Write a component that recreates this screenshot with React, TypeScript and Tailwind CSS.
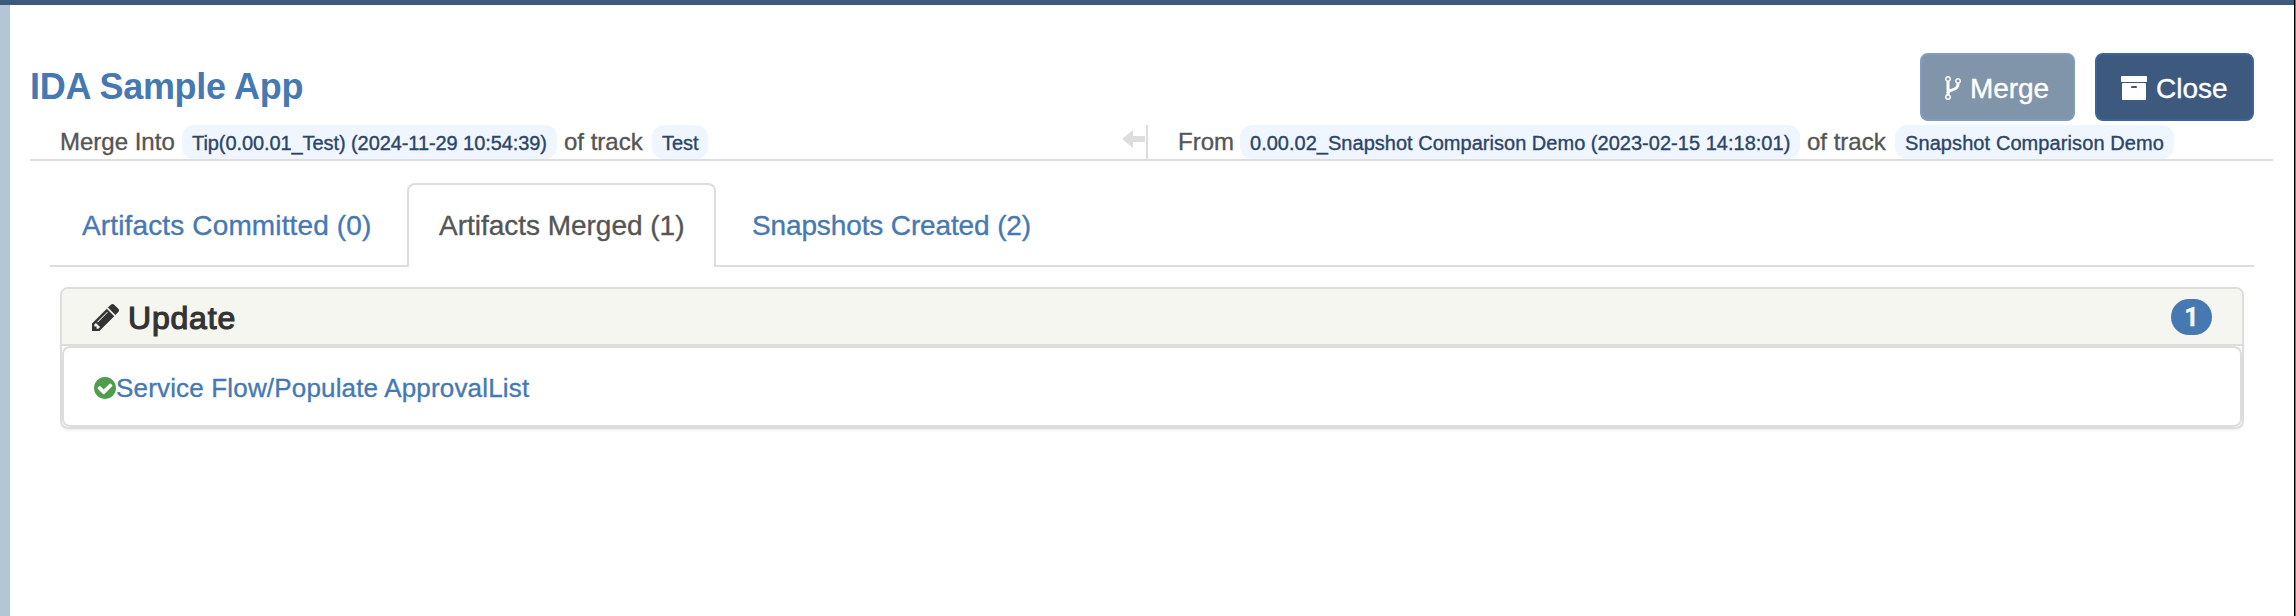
import type { ReactNode } from "react";

function Icon({ path, viewBox, className }: { path: string; viewBox: string; className: string }) {
  return (
    <svg viewBox={viewBox} className={`block shrink-0 fill-current stroke-none ${className}`} aria-hidden="true">
      <path d={path} />
    </svg>
  );
}

const FORK =
  "M288 1472q0-40-28-68t-68-28-68 28-28 68 28 68 68 28 68-28 28-68zM288 320q0-40-28-68t-68-28-68 28-28 68 28 68 68 28 68-28 28-68zM928 448q0-40-28-68t-68-28-68 28-28 68 28 68 68 28 68-28 28-68zM1024 448q0 52-26 96.5t-70 69.5q-2 287-226 414-68 38-203 81-128 40-169.5 71t-41.5 100v26q44 25 70 69.5t26 96.5q0 80-56 136t-136 56-136-56-56-136q0-52 26-96.5t70-69.5v-820q-44-25-70-69.5t-26-96.5q0-80 56-136t136-56 136 56 56 136q0 52-26 96.5t-70 69.5v497q54-26 154-57 55-17 87.5-29.5t70.5-31 59-39.5 40.5-51 28-69.5 8.5-91.5q-44-25-70-69.5t-26-96.5q0-80 56-136t136-56 136 56 56 136z";
const ARCHIVE =
  "M1088 832q0-26-19-45t-45-19h-256q-26 0-45 19t-19 45 19 45 45 19h256q26 0 45-19t19-45zM1664 640v960q0 26-19 45t-45 19h-1408q-26 0-45-19t-19-45v-960q0-26 19-45t45-19h1408q26 0 45 19t19 45zM1728 192v256q0 26-19 45t-45 19h-1536q-26 0-45-19t-19-45v-256q0-26 19-45t45-19h1536q26 0 45 19t19 45z";
const PENCIL =
  "M363 1536l91-91-235-235-91 91v107h128v128h107zM886 608q0-22-22-22-10 0-17 7l-542 542q-7 7-7 17 0 22 22 22 10 0 17-7l542-542q7-7 7-17zM832 416l416 416-832 832h-416v-416zM1515 512q0 53-37 90l-166 166-416-416 166-165q36-38 90-38 53 0 91 38l235 234q37 39 37 91z";
const CHECK =
  "M1284 734q0-28-18-46l-91-90q-19-19-45-19t-45 19l-408 407-226-226q-19-19-45-19t-45 19l-91 90q-18 18-18 46 0 27 18 45l362 362q19 19 45 19 27 0 46-19l543-543q18-18 18-45zM1536 896q0 209-103 385.5t-279.5 279.5-385.5 103-385.5-103-279.5-279.5-103-385.5 103-385.5 279.5-279.5 385.5-103 385.5 103 279.5 279.5 103 385.5z";

function Pill({ className, children }: { className: string; children: ReactNode }) {
  return (
    <span className={`flex h-[34px] items-center rounded-[12px] bg-[#eff6ff] pl-[10px] pt-px text-[20px] text-[#2c4468] ${className}`}>
      {children}
    </span>
  );
}

export default function App() {
  return (
    <div className="flex h-[616px] w-[2296px] flex-col overflow-hidden whitespace-nowrap bg-white font-['Liberation_Sans',Arial,sans-serif] text-[#555] [-webkit-text-stroke:0.35px_currentColor]">
      <div className="flex h-full">
        <div className="flex min-w-0 flex-1 flex-col">
          <div className="h-[5px] shrink-0 bg-[#3d5a7e]" />
          <div className="flex flex-1">
            <div className="w-[10px] shrink-0 bg-[#b3c6d7]" />
            <main className="min-w-0 flex-1 pl-[20px] pr-[21px]">
              <header className="flex h-[120px] items-start justify-between pr-[19px] pt-[48px]">
                <h1 className="pt-[13px] text-[36px] font-bold leading-[42px] tracking-[-0.3px] text-[#4679b2] [-webkit-text-stroke:0px]">IDA Sample App</h1>
                <div className="flex gap-[20px] text-[28px] text-white">
                  <button className="flex h-[68px] w-[155px] items-center rounded-[8px] border-2 border-[#7f9cc2] bg-[#8195aa] pl-[23px]">
                    <Icon path={FORK} viewBox="0 128 1024 1536" className="mt-[2px] h-[24px] w-[16px]" />
                    <span className="ml-[9px] pt-[3px] tracking-[-0.1px]">Merge</span>
                  </button>
                  <button className="flex h-[68px] w-[159px] items-center rounded-[8px] border-2 border-[#3a669c] bg-[#3d5a7e] pl-[24px]">
                    <Icon path={ARCHIVE} viewBox="64 128 1664 1536" className="mt-[2px] h-[24px] w-[26px]" />
                    <span className="ml-[9px] pt-[3px]">Close</span>
                  </button>
                </div>
              </header>

              <div className="flex h-[36px] border-b-2 border-[#ddd] text-[24px]">
                <div className="flex w-[1116px] pl-[30px]">
                  <span className="w-[122px] leading-[34px]">Merge Into</span>
                  <Pill className="w-[375px] tracking-[-0.08px]">Tip(0.00.01_Test) (2024-11-29 10:54:39)</Pill>
                  <span className="ml-[7px] w-[88px] leading-[34px]">of track</span>
                  <Pill className="w-[56px]">Test</Pill>
                  <svg viewBox="0 0 23 18" className="ml-auto mr-px mt-[5px] h-[18px] w-[23px] fill-[#ddd]">
                    <path d="M0 9 11 0v6h12v6H11v6z" />
                  </svg>
                </div>
                <div className="flex flex-1 border-l-2 border-[#ddd] pl-[30px]">
                  <span className="w-[62px] leading-[34px]">From</span>
                  <Pill className="w-[560px] tracking-[0.02px]">0.00.02_Snapshot Comparison Demo (2023-02-15 14:18:01)</Pill>
                  <span className="ml-[7px] w-[88px] leading-[34px]">of track</span>
                  <Pill className="w-[279px] tracking-[0.09px]">Snapshot Comparison Demo</Pill>
                </div>
              </div>

              <nav className="ml-[20px] mr-[19px] mt-[22px] flex h-[84px] items-end text-[28px] leading-[40px] text-[#4679b2]">
                <div className="h-full w-[357px] border-b-2 border-[#ddd] pl-[32px] pt-[23px] tracking-[0.14px]">Artifacts Committed (0)</div>
                <div className="h-full w-[309px] rounded-t-[8px] border-2 border-b-0 border-[#ddd] pl-[30px] pt-[21px] tracking-[-0.02px] text-[#555]">Artifacts Merged (1)</div>
                <div className="h-full flex-1 border-b-2 border-[#ddd] pl-[36px] pt-[23px] tracking-[-0.13px]">Snapshots Created (2)</div>
              </nav>

              <section className="ml-[30px] mr-[29px] mt-[20px] h-[142px] rounded-[8px] border-2 border-[#ddd] shadow-[0_2px_2px_rgba(0,0,0,0.05)]">
                <div className="flex h-[57px] items-center justify-between rounded-t-[6px] border-b-2 border-[#ddd] bg-[#f5f6f0] pl-[30px] pr-[30px]">
                  <h2 className="flex items-center text-[32px] text-[#333]">
                    <Icon path={PENCIL} viewBox="0 149 1515 1515" className="mt-px h-[27px] w-[27px]" />
                    <span className="ml-[9px] pt-[3px] tracking-[0.8px] [-webkit-text-stroke:1.2px_#333]">Update</span>
                  </h2>
                  <span className="flex h-[36px] w-[41px] items-center justify-center rounded-[20px] bg-[#4679b2] pt-[2px] font-[Roboto,sans-serif] text-[25px] font-bold text-[#f5f6f0]">1</span>
                </div>
                <div className="flex h-[81px] items-center rounded-[8px] border-2 border-[#ddd] pl-[30px] text-[26px] text-[#4679b2]">
                  <Icon path={CHECK} viewBox="0 128 1536 1536" className="mt-[2px] h-[22px] w-[22px] text-[#4f9e4c]" />
                  <span className="pt-[3px] tracking-[0.17px]">Service Flow/Populate ApprovalList</span>
                </div>
              </section>
            </main>
          </div>
        </div>
        <div className="w-px bg-black" />
        <div className="w-px bg-[#777]" />
      </div>
    </div>
  );
}
